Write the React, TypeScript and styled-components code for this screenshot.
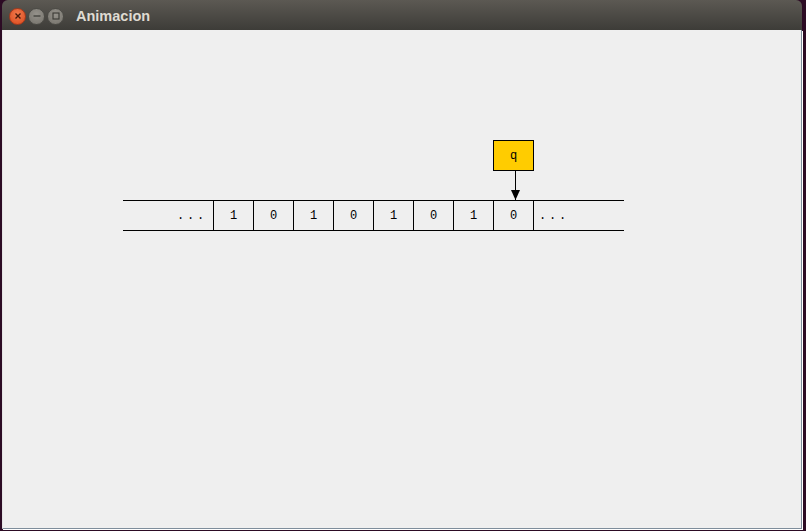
import React from 'react'
import styled, { createGlobalStyle } from 'styled-components'

const GlobalStyle = createGlobalStyle`
  html, body {
    margin: 0;
    padding: 0;
    background: #2c0b24;
    width: 806px;
    height: 531px;
    overflow: hidden;
  }
`

const Desktop = styled.div`
  display: flex;
  padding-left: 2px;
  height: 531px;
`

const Window = styled.div`
  display: flex;
  flex-direction: column;
  width: 800px;
  height: 529px;
`

const TitleBar = styled.header`
  display: flex;
  align-items: center;
  height: 30px;
  flex: none;
  padding-left: 7px;
  box-sizing: border-box;
  border-radius: 6px 6px 0 0;
  background: linear-gradient(#5c5953, #3d3c38);
`

const Controls = styled.div`
  display: flex;
  gap: 2px;
  margin-top: 2px;
`

const WinButton = styled.span<{ $close?: boolean }>`
  display: flex;
  align-items: center;
  justify-content: center;
  width: 17px;
  height: 17px;
  border-radius: 50%;
  box-sizing: border-box;
  border: 1px solid ${(p) => (p.$close ? '#a8391b' : '#4c4b46')};
  background: ${(p) =>
    p.$close
      ? 'radial-gradient(circle at 50% 35%, #f27a4d, #d9491c)'
      : 'radial-gradient(circle at 50% 35%, #95928b, #75726b)'};
`

const Title = styled.h1`
  margin: 0 0 0 12px;
  font: bold 14.5px 'Liberation Sans', 'DejaVu Sans', sans-serif;
  color: #dfdbd2;
  padding-top: 1px;
`

const Content = styled.main`
  flex: 1;
  background: #efefef;
  border-left: 1px solid #e4e4e4;
  border-right: 1px solid #7e8d9b;
  border-bottom: 1px solid #7e8d9b;
  box-shadow: 1px 1px 0 #ffffff;
`

const Stage = styled.div`
  display: flex;
  flex-direction: column;
  padding: 110px 0 0 120px;
`

const HeadTrack = styled.div`
  display: flex;
  height: 60px;
`

const Head = styled.div<{ $offset: number }>`
  display: flex;
  flex-direction: column;
  margin-left: ${(p) => p.$offset}px;
`

const HeadBox = styled.div`
  display: flex;
  align-items: center;
  justify-content: center;
  width: 41px;
  height: 31px;
  box-sizing: border-box;
  border: 1px solid #000;
  background: #ffcc00;
  font: 12px 'Liberation Mono', monospace;
  color: #000;
`

const Tape = styled.div`
  display: flex;
  width: 501px;
  height: 31px;
  box-sizing: border-box;
  border-top: 1px solid #000;
  border-bottom: 1px solid #000;
  font: 12px 'Liberation Mono', monospace;
  color: #000;
`

const TapeEnd = styled.div<{ $side: 'left' | 'right' }>`
  display: flex;
  align-items: center;
  justify-content: ${(p) => (p.$side === 'left' ? 'flex-end' : 'flex-start')};
  box-sizing: border-box;
  width: ${(p) => (p.$side === 'left' ? 90 : 91)}px;
  padding: ${(p) => (p.$side === 'left' ? '0 6px 0 0' : '0 0 0 5px')};
  border-left: ${(p) => (p.$side === 'right' ? '1px solid #000' : 'none')};
  letter-spacing: 2.8px;
`

const Cell = styled.div`
  display: flex;
  align-items: center;
  justify-content: center;
  width: 40px;
  box-sizing: border-box;
  border-left: 1px solid #000;
`

const cells = ['1', '0', '1', '0', '1', '0', '1', '0']
const headIndex = 7

const Arrow = () => (
  <svg width="41" height="29" viewBox="0 0 41 29">
    <line x1="22.5" y1="0" x2="22.5" y2="29" stroke="#000" strokeWidth="1" />
    <polygon points="18,19 27,19 22.5,29" fill="#000" />
  </svg>
)

const App = () => (
  <>
    <GlobalStyle />
    <Desktop>
      <Window>
        <TitleBar>
          <Controls>
            <WinButton $close>
              <svg width="8" height="8" viewBox="0 0 8 8">
                <path d="M1.5 1.5 L6.5 6.5 M6.5 1.5 L1.5 6.5" stroke="#4a1a0a" strokeWidth="1.4" />
              </svg>
            </WinButton>
            <WinButton>
              <svg width="8" height="8" viewBox="0 0 8 8">
                <path d="M0.5 4 H7.5" stroke="#3a3934" strokeWidth="1.2" />
              </svg>
            </WinButton>
            <WinButton>
              <svg width="8" height="8" viewBox="0 0 8 8">
                <rect x="1" y="1" width="6" height="6" fill="none" stroke="#3a3934" strokeWidth="1.1" />
              </svg>
            </WinButton>
          </Controls>
          <Title>Animacion</Title>
        </TitleBar>
        <Content>
          <Stage>
            <HeadTrack>
              <Head $offset={90 + headIndex * 40}>
                <HeadBox>q</HeadBox>
                <Arrow />
              </Head>
            </HeadTrack>
            <Tape>
              <TapeEnd $side="left">...</TapeEnd>
              {cells.map((c, i) => (
                <Cell key={i}>{c}</Cell>
              ))}
              <TapeEnd $side="right">...</TapeEnd>
            </Tape>
          </Stage>
        </Content>
      </Window>
    </Desktop>
  </>
)

export default App
